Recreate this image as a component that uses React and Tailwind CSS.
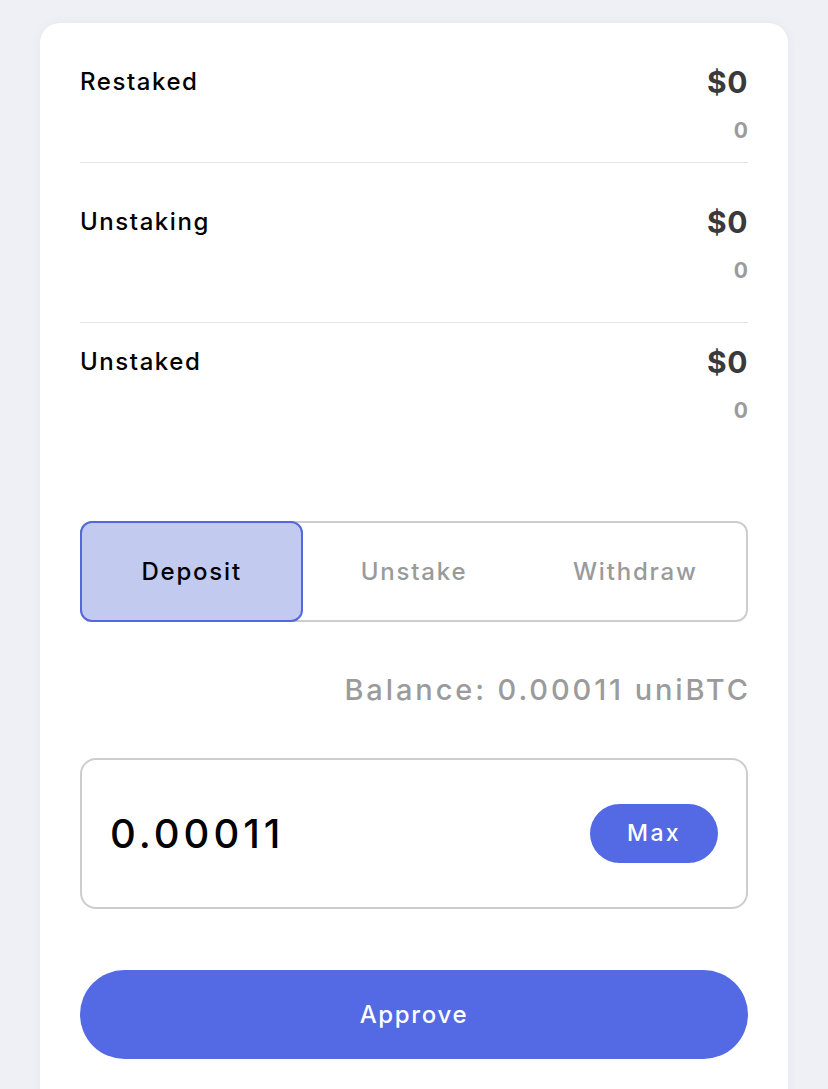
import React, { useState } from 'react';

// spacing per row is uneven in the design, so keep it on the data
const rows = [
    { label: 'Restaked', usd: '$0', amount: '0', pad: 'pt-[41px] pb-[17px] border-b border-[#e4e4e6]' },
    { label: 'Unstaking', usd: '$0', amount: '0', pad: 'pt-[41px] pb-[37px] border-b border-[#e4e4e6]' },
    { label: 'Unstaked', usd: '$0', amount: '0', pad: 'pt-[21px]' },
];

const tabs = ['Deposit', 'Unstake', 'Withdraw'];

export default function App() {
    const [activeTab, setActiveTab] = useState('Deposit');
    const [value, setValue] = useState('0.00011');

    return (
        <div
            className="min-h-screen bg-[#eef0f5] px-10 pt-[23px]"
            style={{ fontFamily: 'Inter, "Noto Sans", sans-serif' }}
        >
            <div className="bg-white rounded-[20px] px-10 pb-16 shadow-[0_0_12px_rgba(30,40,90,0.04)]">

                {/* balances */}
                {rows.map(row => (
                    <div key={row.label} className={row.pad}>
                        <div className="flex items-center justify-between h-9">
                            <span className="text-[24px] font-medium text-black tracking-[0.065em]">{row.label}</span>
                            <span className="text-[30px] font-bold text-[#3a3a3c] tracking-[0.02em]">{row.usd}</span>
                        </div>
                        <div className="mt-[17px] text-right text-[21px] leading-7 font-bold text-[#9b9b9b]">
                            {row.amount}
                        </div>
                    </div>
                ))}

                {/* tabs */}
                <div className="mt-24 grid grid-cols-3 h-[101px] rounded-[12px] border-2 border-[#cdcdcd]">
                    {tabs.map(tab => (
                        <button
                            key={tab}
                            onClick={() => setActiveTab(tab)}
                            className={`text-[24px] font-medium tracking-[0.075em] rounded-[12px] ${activeTab === tab
                                ? '-m-[2px] mr-0 bg-[#c2caef] border-2 border-[#5567dc] text-black'
                                : 'text-[#9a9a9a]'
                                }`}
                        >
                            {tab}
                        </button>
                    ))}
                </div>

                <div className="mt-[51px] -mr-[3px] text-right text-[29px] leading-[34px] font-medium text-[#9b9b9b] tracking-[0.1em]">
                    Balance: 0.00011 uniBTC
                </div>

                {/* amount input */}
                <div className="mt-[51px] h-[151px] rounded-[16px] border-2 border-[#cdcdcd] flex items-center justify-between pl-[28px] pr-[28px]">
                    <input
                        value={value}
                        onChange={e => setValue(e.target.value)}
                        className="w-[360px] bg-transparent outline-none text-[40px] font-medium text-black tracking-[0.1em]"
                    />
                    <button
                        onClick={() => setValue('0.00011')}
                        className="w-32 h-[59px] rounded-full bg-[#5469e4] text-white text-[23px] font-medium tracking-[0.1em]"
                    >
                        Max
                    </button>
                </div>

                <button className="mt-[61px] w-full h-[89px] rounded-full bg-[#5469e4] text-white text-[24px] font-medium tracking-[0.07em]">
                    Approve
                </button>
            </div>
        </div>
    );
}
